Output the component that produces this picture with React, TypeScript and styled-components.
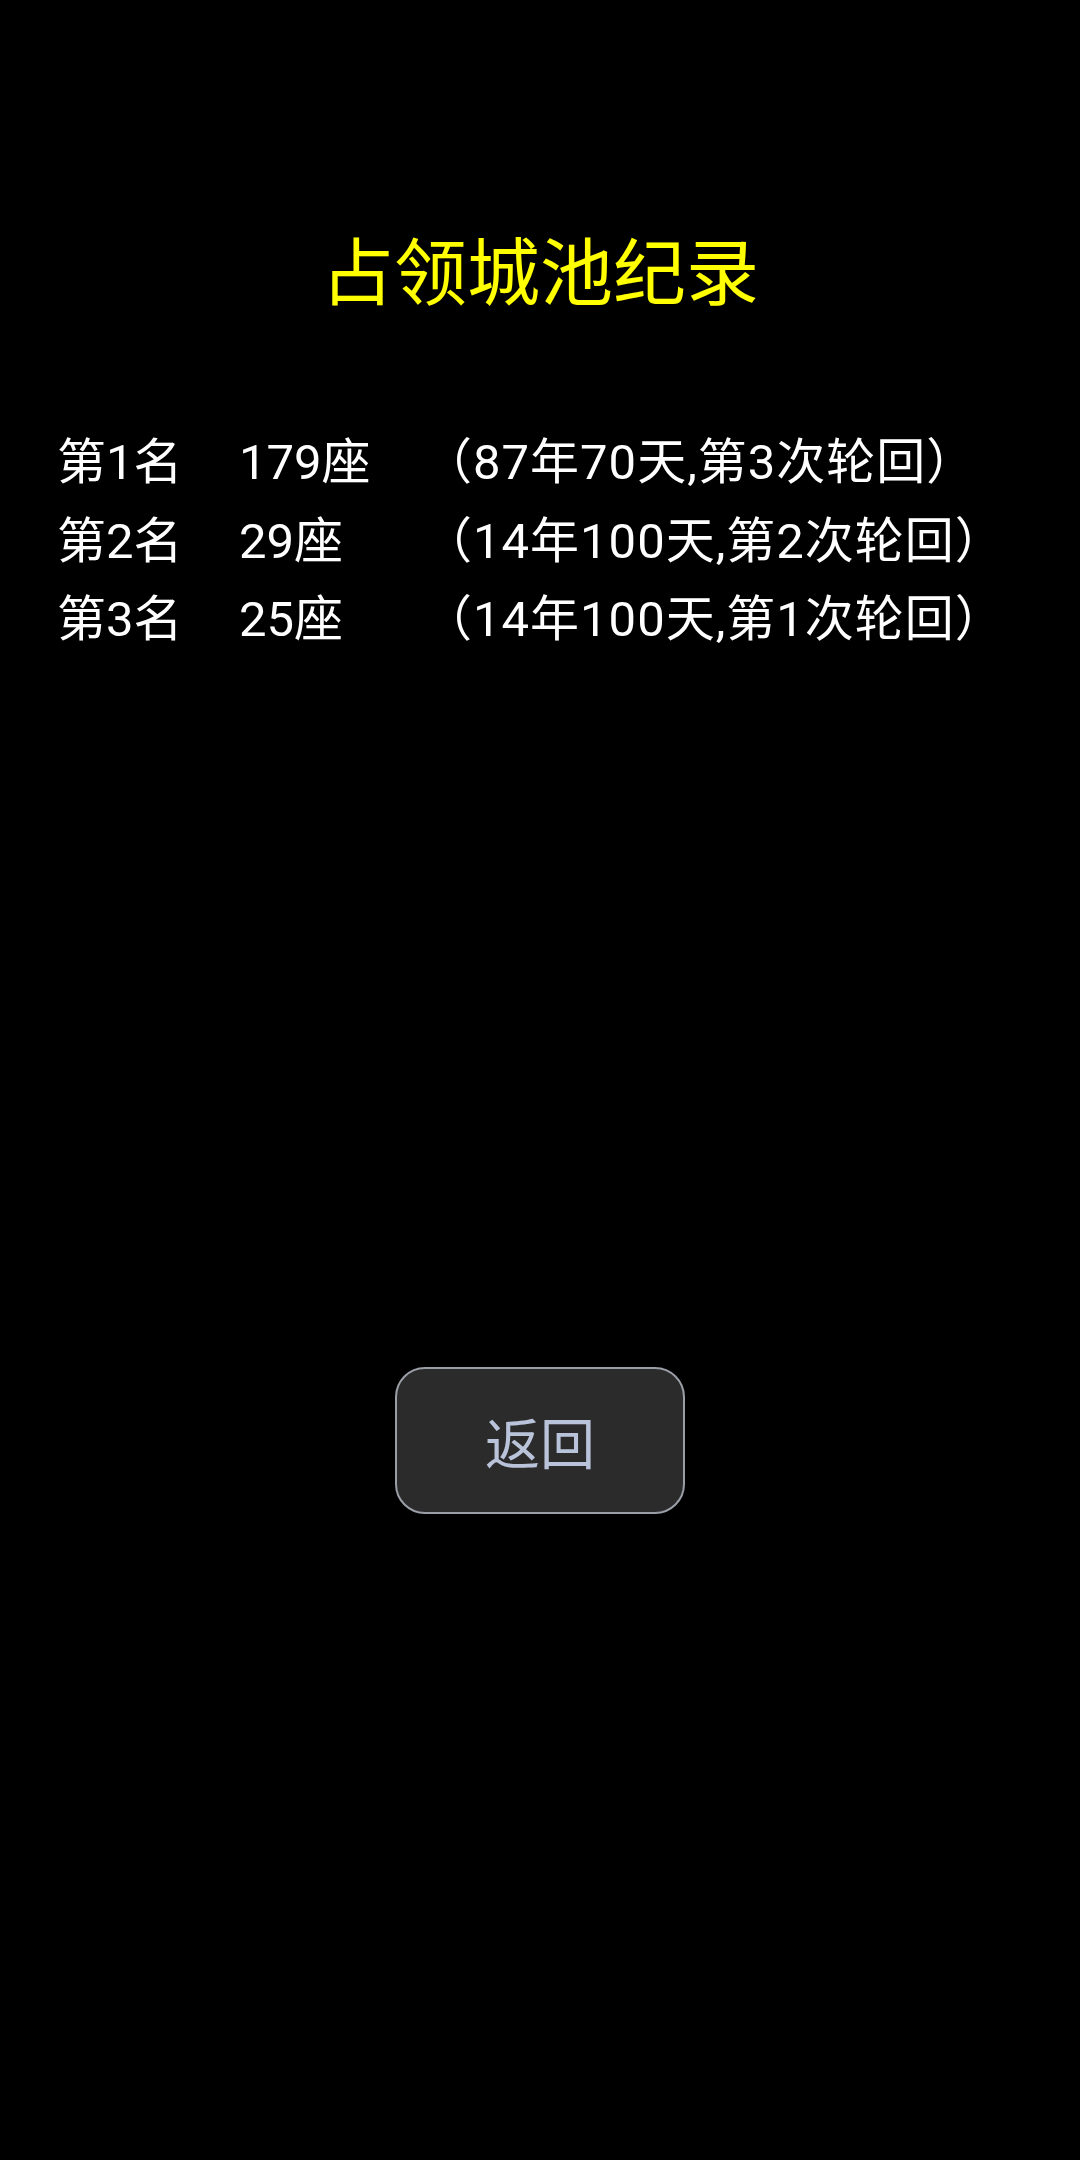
import styled, { createGlobalStyle } from "styled-components";

const GlobalStyle = createGlobalStyle`
  html, body {
    margin: 0;
    padding: 0;
    background: #000;
  }
  body {
    font-family: Roboto, "Noto Sans CJK SC", sans-serif;
  }
`;

const RECORDS = [
  { rank: "第1名", count: "179座", detail: "（87年70天,第3次轮回）" },
  { rank: "第2名", count: "29座", detail: "（14年100天,第2次轮回）" },
  { rank: "第3名", count: "25座", detail: "（14年100天,第1次轮回）" },
];

export default function App() {
  return (
    <>
      <GlobalStyle />
      <Screen>
        <Title>占领城池纪录</Title>
        <RecordList>
          {RECORDS.map((r) => (
            <RecordRow key={r.rank}>
              <span>{r.rank}</span>
              <span>{r.count}</span>
              <Detail>{r.detail}</Detail>
            </RecordRow>
          ))}
        </RecordList>
        <BackButton>返回</BackButton>
      </Screen>
    </>
  );
}

const Screen = styled.div`
  width: 1080px;
  height: 2160px;
  background: #000;
  display: flex;
  flex-direction: column;
  align-items: center;
  padding-top: 238px;
  box-sizing: border-box;
`;

const Title = styled.h1`
  margin: 0;
  font-size: 73px;
  line-height: 73px;
  font-weight: normal;
  color: #ffff00;
`;

const RecordList = styled.div`
  align-self: stretch;
  margin-top: 113px;
  padding-left: 57px;
  display: flex;
  flex-direction: column;
`;

const RecordRow = styled.div`
  display: grid;
  grid-template-columns: 182px 184px auto;
  font-size: 49px;
  line-height: 78.5px;
  color: #fff;
  white-space: nowrap;
`;

const Detail = styled.span`
  letter-spacing: 1px;
`;

const BackButton = styled.button`
  margin-top: 707px;
  width: 290px;
  height: 147px;
  box-sizing: border-box;
  background: #2b2b2b;
  border: 2.5px solid #9a9ea6;
  border-radius: 30px;
  color: #b9c4da;
  font-family: Roboto, "Noto Sans CJK SC", sans-serif;
  font-size: 55px;
  padding: 0;
`;
